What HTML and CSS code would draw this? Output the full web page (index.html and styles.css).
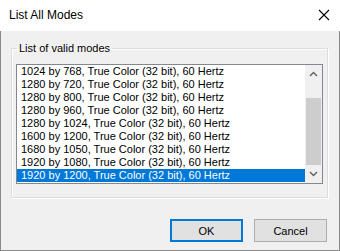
FILE: index.html
```html
<!DOCTYPE html>
<html lang="en">

<head>
    <meta charset="UTF-8">
    <title>List All Modes</title>
    <link rel="stylesheet" href="styles.css">
</head>

<body>
    <div class="titlebar">
        <span class="title">List All Modes</span>
        <svg class="close" width="12" height="12" viewBox="0 0 12 12">
            <path d="M1 1 L11 11 M11 1 L1 11" stroke="#000" stroke-width="1.1" fill="none" />
        </svg>
    </div>

    <div class="client">
        <fieldset class="group">
            <legend>List of valid modes</legend>
            <div class="listbox">
                <ul class="items">
                    <li>1024 by 768, True Color (32 bit), 60 Hertz</li>
                    <li>1280 by 720, True Color (32 bit), 60 Hertz</li>
                    <li>1280 by 800, True Color (32 bit), 60 Hertz</li>
                    <li>1280 by 960, True Color (32 bit), 60 Hertz</li>
                    <li>1280 by 1024, True Color (32 bit), 60 Hertz</li>
                    <li>1600 by 1200, True Color (32 bit), 60 Hertz</li>
                    <li>1680 by 1050, True Color (32 bit), 60 Hertz</li>
                    <li>1920 by 1080, True Color (32 bit), 60 Hertz</li>
                    <li class="selected">1920 by 1200, True Color (32 bit), 60 Hertz</li>
                </ul>
                <div class="scrollbar">
                    <div class="arrow">
                        <svg width="9" height="6" viewBox="0 0 9 6">
                            <path d="M1 5 L4.5 1.5 L8 5" stroke="#606060" stroke-width="1.4" fill="none" />
                        </svg>
                    </div>
                    <div class="track-top"></div>
                    <div class="thumb"></div>
                    <div class="arrow">
                        <svg width="9" height="6" viewBox="0 0 9 6">
                            <path d="M1 1 L4.5 4.5 L8 1" stroke="#606060" stroke-width="1.4" fill="none" />
                        </svg>
                    </div>
                </div>
            </div>
        </fieldset>

        <div class="buttons">
            <button class="btn default">OK</button>
            <button class="btn">Cancel</button>
        </div>
    </div>
</body>

</html>
```

FILE: styles.css
```css
body {
    margin: 0;
    width: 340px;
    height: 251px;
    background: #fff;
    font-family: "Liberation Sans", Arial, sans-serif;
    font-size: 11px;
    color: #000;
    overflow: hidden;
}

.titlebar {
    height: 31px;
    display: flex;
    align-items: center;
    justify-content: space-between;
    padding: 0 10px 0 9px;
    box-sizing: border-box;
}

.title {
    font-size: 12px;
    margin-top: -1px;
}

.close {
    margin-top: -1px;
}

.client {
    height: 220px;
    box-sizing: border-box;
    background: #f0f0f0;
    border: 1px solid #8a8a8a;
    border-top: none;
    padding-top: 10px;
}

.group {
    margin: 0 11px 0 10px;
    padding: 9px 4px 13px 4px;
    border: 1px solid #dcdcdc;
    box-shadow: inset 1px 1px #fff, 1px 1px #fff;
}

.group legend {
    margin-left: 1px;
    padding: 0 2px;
    line-height: 14px;
    font-size: 11px;
}

.listbox {
    display: flex;
    height: 120px;
    box-sizing: border-box;
    border: 1px solid #828790;
    background: #fff;
}

.items {
    flex: 1;
    list-style: none;
    margin: 0;
    padding: 0;
}

.items li {
    height: 13px;
    line-height: 13px;
    padding-left: 4px;
    white-space: nowrap;
}

.items li.selected {
    background: #0078d7;
    color: #fff;
}

.scrollbar {
    width: 17px;
    background: #f0f0f0;
    display: flex;
    flex-direction: column;
}

.arrow {
    height: 17px;
    display: flex;
    align-items: center;
    justify-content: center;
}

.track-top {
    height: 16px;
}

.thumb {
    height: 67px;
    margin: 0 1px;
    background: #cdcdcd;
}

.buttons {
    display: flex;
    justify-content: flex-end;
    gap: 11px;
    margin: 21px 12px 0 0;
}

.btn {
    width: 73px;
    height: 23px;
    box-sizing: border-box;
    padding: 0;
    font-family: inherit;
    font-size: 11px;
    color: #000;
    background: #e1e1e1;
    border: 1px solid #adadad;
    border-radius: 0;
}

.btn.default {
    border: 2px solid #0078d7;
}
```
